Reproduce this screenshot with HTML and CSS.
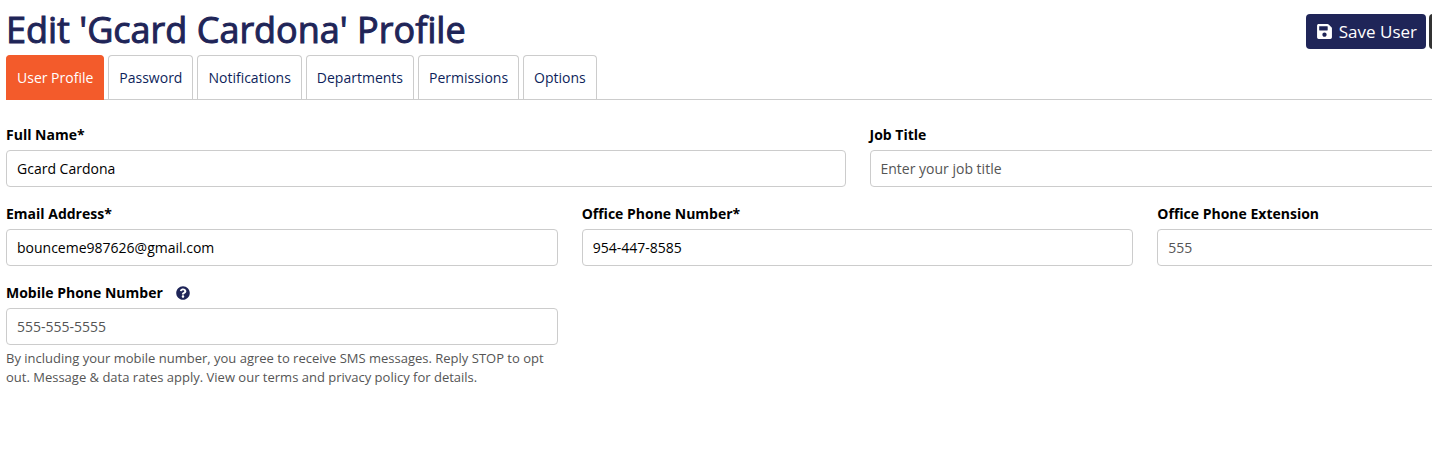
FILE: index.html
```html
<!DOCTYPE html>
<html lang="en">
    <head>
        <meta charset="UTF-8">
        <title>Edit 'Gcard Cardona' Profile</title>
        <link rel="stylesheet" href="styles.css">
    </head>
    <body>
        <header class="page-header">
            <h1>Edit 'Gcard Cardona' Profile</h1>
            <div class="actions">
                <button type="submit" form="profileForm" class="btn btn-primary">
                    <svg class="icon-save" viewBox="0 0 448 512" aria-hidden="true">
                        <path fill="currentColor" d="M433.941 129.941l-83.882-83.882A48 48 0 0 0 316.118 32H48C21.49 32 0 53.49 0 80v352c0 26.51 21.49 48 48 48h352c26.51 0 48-21.49 48-48V163.882a48 48 0 0 0-14.059-33.941zM224 416c-35.346 0-64-28.654-64-64 0-35.346 28.654-64 64-64s64 28.654 64 64c0 35.346-28.654 64-64 64zm96-304.52V212c0 6.627-5.373 12-12 12H76c-6.627 0-12-5.373-12-12V108c0-6.627 5.373-12 12-12h228.52c3.183 0 6.235 1.264 8.485 3.515l3.48 3.48A11.996 11.996 0 0 1 320 111.48z"/>
                    </svg>
                    Save User
                </button>
                <button type="button" class="btn btn-dark" aria-label="More"></button>
            </div>
        </header>

        <nav class="tabs">
            <a href="#profile" class="tab active">User Profile</a>
            <a href="#password" class="tab">Password</a>
            <a href="#notifications" class="tab">Notifications</a>
            <a href="#departments" class="tab">Departments</a>
            <a href="#permissions" class="tab">Permissions</a>
            <a href="#options" class="tab">Options</a>
        </nav>

        <form id="profileForm" class="profile-form">
            <div class="row row-2">
                <div class="field">
                    <label for="fullName">Full Name*</label>
                    <input type="text" id="fullName" value="Gcard Cardona">
                </div>
                <div class="field">
                    <label for="jobTitle">Job Title</label>
                    <input type="text" id="jobTitle" placeholder="Enter your job title">
                </div>
            </div>
            <div class="row row-3">
                <div class="field">
                    <label for="email">Email Address*</label>
                    <input type="email" id="email" value="bounceme987626@gmail.com">
                </div>
                <div class="field">
                    <label for="officePhone">Office Phone Number*</label>
                    <input type="tel" id="officePhone" value="954-447-8585">
                </div>
                <div class="field">
                    <label for="officeExt">Office Phone Extension</label>
                    <input type="text" id="officeExt" placeholder="555">
                </div>
            </div>
            <div class="row row-3">
                <div class="field">
                    <label for="mobilePhone">Mobile Phone Number
                        <svg class="icon-help" viewBox="0 0 512 512" aria-hidden="true">
                            <path fill="currentColor" d="M504 256c0 136.997-111.043 248-248 248S8 392.997 8 256C8 119.083 119.043 8 256 8s248 111.083 248 248zM262.655 90c-54.497 0-89.255 22.957-116.549 63.758-3.536 5.286-2.353 12.415 2.715 16.258l34.699 26.31c5.205 3.947 12.621 3.008 16.665-2.122 17.864-22.658 30.113-35.797 57.303-35.797 20.429 0 45.698 13.148 45.698 32.958 0 14.976-12.363 22.667-32.534 33.976C247.128 238.528 216 254.941 216 296v4c0 6.627 5.373 12 12 12h56c6.627 0 12-5.373 12-12v-1.333c0-28.462 83.186-29.647 83.186-106.667 0-58.002-60.165-102-116.531-102zM256 338c-25.365 0-46 20.635-46 46 0 25.364 20.635 46 46 46s46-20.636 46-46c0-25.365-20.635-46-46-46z"/>
                        </svg>
                    </label>
                    <input type="tel" id="mobilePhone" placeholder="555-555-5555" aria-describedby="mobileHelp">
                    <p class="help" id="mobileHelp">By including your mobile number, you agree to receive SMS messages. Reply STOP to opt out. Message &amp; data rates apply. View our terms and privacy policy for details.</p>
                </div>
            </div>
        </form>
    </body>
</html>
```
FILE: styles.css
```css
* {
    box-sizing: border-box;
}

html {
    overflow-x: hidden;
}

body {
    margin: 0;
    padding: 5px 0 0 6px;
    background: #ffffff;
    font-family: "Open Sans", "Noto Sans", sans-serif;
    font-size: 14px;
    line-height: 20px;
    color: #000000;
    overflow-x: hidden;
}

/* header and form run past the right edge of the window */
.page-header {
    display: flex;
    justify-content: space-between;
    align-items: flex-end;
    margin-right: -37px;
    padding-bottom: 1px;
}

h1 {
    margin: 0;
    font-size: 36px;
    font-weight: 500;
    line-height: 49px;
    color: #1f2558;
    -webkit-text-stroke: 1px #1f2558;
}

.actions {
    display: flex;
    gap: 3px;
    padding-bottom: 5px;
}

.btn {
    display: flex;
    align-items: center;
    gap: 7px;
    height: 35px;
    padding: 0 9px 0 11px;
    border: 0;
    border-radius: 4px;
    font-family: inherit;
    font-size: 17px;
    font-weight: 500;
    color: #ffffff;
    cursor: pointer;
}

.btn-primary {
    background: #1f2558;
}

.btn-dark {
    width: 40px;
    background: #333333;
}

.icon-save {
    width: 15px;
    height: 17px;
}

.tabs {
    display: flex;
    gap: 4px;
    border-bottom: 1px solid #cccccc;
}

.tab {
    height: 44px;
    padding: 12px 10px;
    border: 1px solid #cccccc;
    border-bottom: 0;
    border-radius: 4px 4px 0 0;
    color: #0e1f5b;
    text-decoration: none;
}

.tab.active {
    height: 45px;
    margin-bottom: -1px;
    background: #f35b2b;
    border-color: #f35b2b;
    font-weight: 500;
    color: #ffffff;
}

.profile-form {
    display: grid;
    gap: 17px;
    margin: 25px -277px 0 0;
}

.row {
    display: grid;
    gap: 24px;
}

.row-2 {
    grid-template-columns: repeat(2, 1fr);
}

.row-3 {
    grid-template-columns: repeat(3, 1fr);
}

.field label {
    display: flex;
    align-items: center;
    margin-bottom: 5px;
    font-weight: 700;
}

.field input {
    display: block;
    width: 100%;
    height: 37px;
    padding: 0 10px;
    border: 1px solid #cccccc;
    border-radius: 4px;
    background: #ffffff;
    font-family: inherit;
    font-size: 14px;
    color: #000000;
}

.field input::placeholder {
    color: #555555;
    opacity: 1;
}

.icon-help {
    width: 14px;
    height: 14px;
    margin-left: 13px;
    color: #1f2558;
}

.help {
    margin: 4px 0 0;
    font-size: 13px;
    line-height: 19px;
    color: #555555;
}
```
